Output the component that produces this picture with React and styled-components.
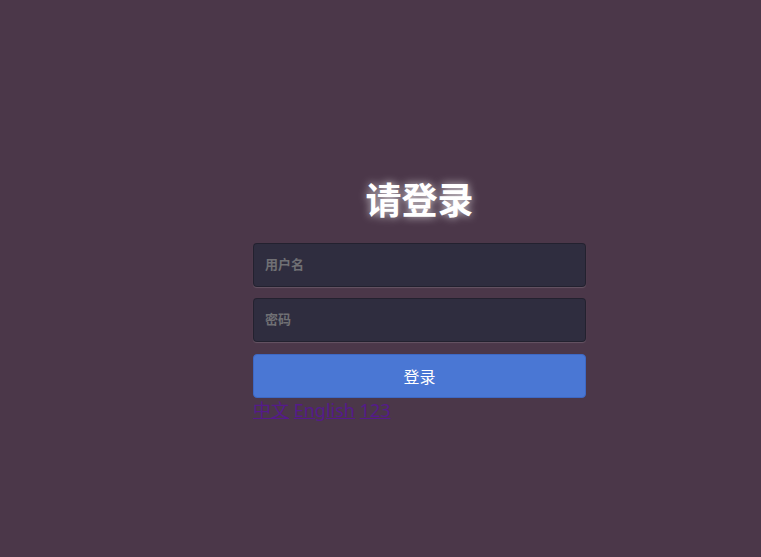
import React from 'react';
import styled, { createGlobalStyle } from 'styled-components';

const GlobalStyle = createGlobalStyle`
  html, body {
    margin: 0;
    padding: 0;
    background: #4b3749;
    font-family: "Noto Sans", "Noto Sans CJK SC", sans-serif;
  }
`;

const Page = styled.div`
  width: 100vw;
  height: 100vh;
  box-sizing: border-box;
  padding-top: 176px;
  padding-left: 253px;
`;

const Login = styled.form`
  width: 333px;
  display: flex;
  flex-direction: column;
`;

const Title = styled.h1`
  margin: 0 0 23px;
  height: 44px;
  line-height: 44px;
  text-align: center;
  color: #fff;
  font-size: 36px;
  font-weight: 700;
  font-family: "Noto Sans CJK SC", sans-serif;
  text-shadow: 0 0 8px rgba(255, 255, 255, 0.75);
`;

const Input = styled.input`
  box-sizing: border-box;
  width: 100%;
  height: 44px;
  margin-bottom: ${(p) => p.$gap || 11}px;
  padding: 0 11px 3px;
  background: #2f2d3f;
  border: 1px solid rgba(0, 0, 0, 0.25);
  border-radius: 4px;
  box-shadow: 0 1px 1px rgba(255, 255, 255, 0.15);
  color: #ddd;
  font-size: 13px;
  font-weight: 700;
  font-family: "Noto Sans CJK SC", sans-serif;
  outline: none;

  &::placeholder {
    color: #707074;
  }
`;

const Button = styled.button`
  box-sizing: border-box;
  width: 100%;
  height: 44px;
  background: #4a77d4;
  border: 1px solid #3d68c4;
  border-radius: 4px;
  color: #fff;
  font-size: 16px;
  font-family: "Noto Sans CJK SC", sans-serif;
  cursor: pointer;
`;

const Langs = styled.div`
  font-size: 18px;
  line-height: 24px;
  font-family: "Noto Sans", "Noto Sans CJK SC", sans-serif;
`;

const Lang = styled.a`
  color: #551a8b;
  text-decoration: underline;
`;

const App = () => {
  return (
    <>
      <GlobalStyle />
      <Page>
        <Login onSubmit={(e) => e.preventDefault()}>
          <Title>请登录</Title>
          <Input placeholder="用户名" />
          <Input type="password" placeholder="密码" $gap={12} />
          <Button type="submit">登录</Button>
          <Langs>
            <Lang href="#">中文</Lang> <Lang href="#">English</Lang> <Lang href="#">123</Lang>
          </Langs>
        </Login>
      </Page>
    </>
  );
};

export default App;
